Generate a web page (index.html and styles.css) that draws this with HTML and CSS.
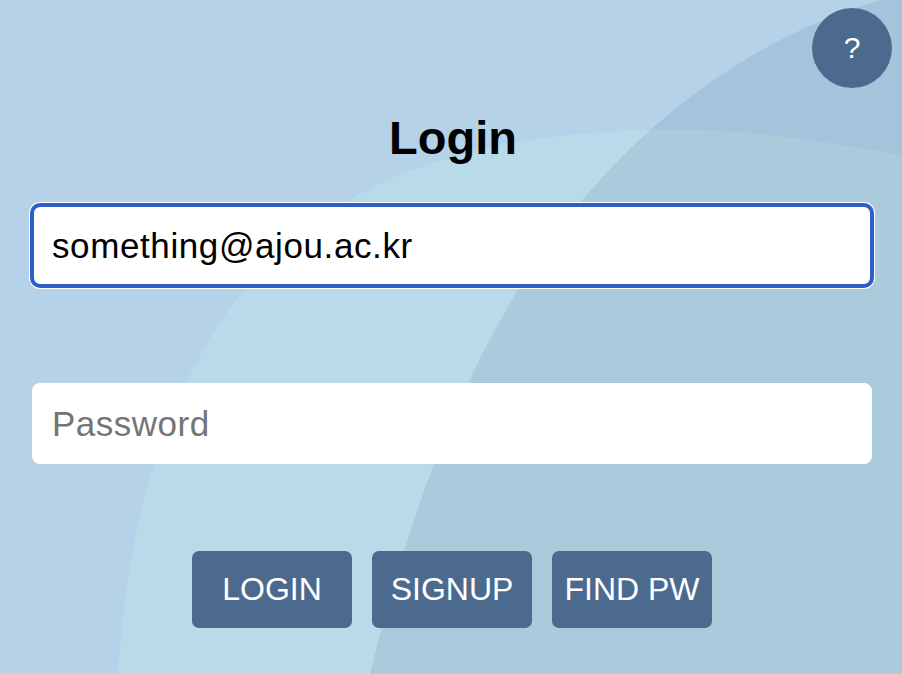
FILE: index.html
```html
<!DOCTYPE html>
<html lang="en">
<head>
<meta charset="utf-8">
<title>Login</title>
<link rel="stylesheet" href="styles.css">
</head>
<body>
<div class="page">
  <svg class="bg" viewBox="0 0 902 674" preserveAspectRatio="none" aria-hidden="true">
    <rect width="902" height="674" fill="#b5d2e9"/>
    <path d="M118,674 C128,520 165,385 250,282 C335,180 470,134 650,130 C760,128 840,145 902,155 L902,674 Z" fill="#b9dbe9"/>
    <path d="M370,674 C420,470 490,300 600,180 C680,92 780,28 882,0 L902,0 L902,674 Z" fill="#4c6a8e" fill-opacity="0.14"/>
  </svg>

  <button class="help" type="button">?</button>

  <main class="login">
    <h1 class="title">Login</h1>
    <input class="field field-focus" type="email" value="something@ajou.ac.kr">
    <input class="field field-pw" type="password" placeholder="Password">
    <div class="actions">
      <button class="btn" type="button">LOGIN</button>
      <button class="btn" type="button">SIGNUP</button>
      <button class="btn" type="button">FIND PW</button>
    </div>
  </main>
</div>
</body>
</html>
```

FILE: styles.css
```css
* { box-sizing: border-box; }

html, body {
  margin: 0;
  padding: 0;
  width: 902px;
  height: 674px;
  overflow: hidden;
  font-family: "Liberation Sans", Arial, sans-serif;
}

.page {
  position: relative;
  width: 902px;
  height: 674px;
}

.bg {
  position: absolute;
  inset: 0;
  width: 902px;
  height: 674px;
  z-index: 0;
}

.help {
  position: absolute;
  top: 8px;
  left: 812px;
  width: 80px;
  height: 80px;
  border-radius: 50%;
  border: none;
  background: #4c6a8e;
  color: #ffffff;
  font-family: "Liberation Sans", Arial, sans-serif;
  font-size: 30px;
  line-height: 80px;
  padding: 0;
  z-index: 2;
}

.login {
  position: relative;
  z-index: 1;
  display: flex;
  flex-direction: column;
  padding: 111px 30px 0 32px;
}

.title {
  margin: 0;
  height: 54px;
  line-height: 54px;
  font-size: 47px;
  font-weight: 700;
  color: #000000;
  text-align: center;
  padding-left: 2px;
}

.field {
  width: 840px;
  height: 81px;
  border-radius: 8px;
  border: 2px solid #ffffff;
  background: #ffffff;
  padding: 0 18px;
  font-family: "Liberation Sans", Arial, sans-serif;
  font-size: 35px;
  color: #000000;
  outline: none;
}

.field::placeholder {
  color: #757575;
  letter-spacing: 0.5px;
}

.field-focus {
  margin-top: 40px;
  border-color: #2d5fc9;
  box-shadow: 0 0 0 2px #2d5fc9, 0 0 0 3px #ffffff;
  letter-spacing: 0.6px;
}

.field-pw {
  margin-top: 97px;
}

.actions {
  margin-top: 87px;
  display: flex;
  justify-content: center;
  gap: 20px;
}

.btn {
  width: 160px;
  height: 77px;
  border: none;
  border-radius: 7px;
  background: #4c6a8e;
  color: #ffffff;
  font-family: "Liberation Sans", Arial, sans-serif;
  font-size: 32px;
  padding: 0;
}
```
